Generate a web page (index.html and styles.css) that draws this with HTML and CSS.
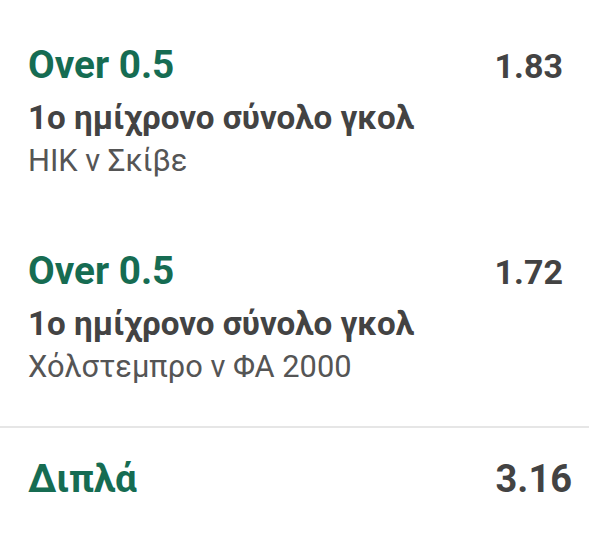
FILE: index.html
```html
<!DOCTYPE html>
<html lang="el">
<head>
<meta charset="utf-8">
<link rel="stylesheet" href="styles.css">
</head>
<body>
<div class="slip">
  <div class="selection">
    <div class="row">
      <span class="pick">Over 0.5</span>
      <span class="odds">1.83</span>
    </div>
    <div class="market">1ο ημίχρονο σύνολο γκολ</div>
    <div class="event">ΗΙΚ ν Σκίβε</div>
  </div>
  <div class="selection">
    <div class="row">
      <span class="pick">Over 0.5</span>
      <span class="odds">1.72</span>
    </div>
    <div class="market">1ο ημίχρονο σύνολο γκολ</div>
    <div class="event">Χόλστεμπρο ν ΦΑ 2000</div>
  </div>
  <div class="total">
    <span class="pick">Διπλά</span>
    <span class="odds odds-total">3.16</span>
  </div>
</div>
</body>
</html>
```

FILE: styles.css
```css
html, body {
  margin: 0;
  padding: 0;
  background: #ffffff;
}
body {
  font-family: Roboto, "Noto Sans", sans-serif;
  width: 589px;
  height: 534px;
  overflow: hidden;
}
.slip {
  display: flex;
  flex-direction: column;
}
.selection {
  padding: 43px 26px 24px 28px;
}
.row {
  display: flex;
  justify-content: space-between;
  align-items: baseline;
}
.pick {
  color: #166c52;
  font-weight: 700;
  font-size: 38.7px;
  line-height: 44px;
}
.odds {
  color: #434343;
  font-weight: 700;
  font-size: 34px;
  line-height: 44px;
}
.odds-total {
  font-size: 38px;
}
.market {
  color: #434343;
  font-weight: 700;
  font-size: 33.2px;
  line-height: 42px;
  margin-top: 9px;
}
.event {
  color: #555555;
  font-size: 30.8px;
  line-height: 42px;
  margin-top: 1px;
}
.total {
  border-top: 2px solid #e6e6e6;
  margin-top: 14px;
  display: flex;
  justify-content: space-between;
  align-items: baseline;
  padding: 29px 17px 0 28px;
}
```
